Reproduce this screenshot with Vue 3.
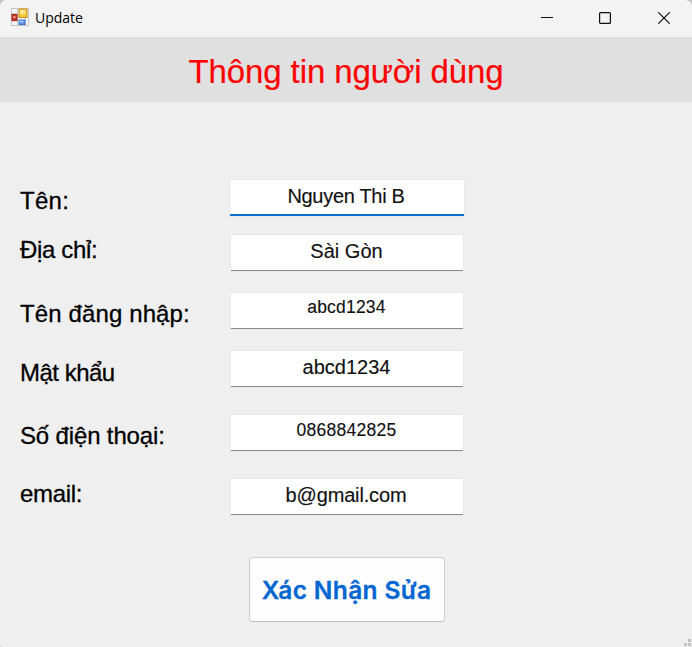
<script setup>
import { reactive } from 'vue'

const fields = reactive([
  { id: 'name', label: 'Tên:', value: 'Nguyen Thi B' },
  { id: 'address', label: 'Địa chỉ:', value: 'Sài Gòn' },
  { id: 'login', label: 'Tên đăng nhập:', value: 'abcd1234' },
  { id: 'password', label: 'Mật khẩu', value: 'abcd1234' },
  { id: 'phone', label: 'Số điện thoại:', value: '0868842825' },
  { id: 'email', label: 'email:', value: 'b@gmail.com' },
])
</script>

<template>
  <div class="window">
    <header class="titlebar">
      <svg class="app-icon" width="18" height="18" viewBox="0 0 18 18">
        <rect x="0.5" y="0.5" width="17" height="17" fill="#f4f5f6" stroke="#c3c5c8" />
        <path d="M6.5 0.5V17.5M0.5 5.5H6M0.5 13H6M14.5 10V17.5" stroke="#c9cbce" fill="none" />
        <rect x="8" y="1" width="8" height="8.5" fill="#f7c93e" stroke="#c99512" />
        <rect x="9" y="2" width="5" height="4" fill="#fde694" />
        <rect x="1" y="6.5" width="5" height="6" fill="#c93a30" stroke="#a5231d" />
        <rect x="2.5" y="8" width="2" height="2" fill="#f0a39b" />
        <rect x="8" y="12" width="6" height="4.5" fill="#5b92e5" stroke="#3f74cd" />
        <rect x="8.5" y="12.5" width="4" height="2" fill="#9cc1f5" />
      </svg>
      <span class="caption">Update</span>
      <div class="controls">
        <svg width="12" height="12" viewBox="0 0 12 12"><path d="M0 5.5H12" /></svg>
        <svg width="12" height="12" viewBox="0 0 12 12"><rect x="0.6" y="0.6" width="10.8" height="10.8" rx="1" /></svg>
        <svg width="12" height="12" viewBox="0 0 12 12"><path d="M0.3 0.3L11.7 11.7M11.7 0.3L0.3 11.7" /></svg>
      </div>
    </header>
    <div class="banner"><h1>Thông tin người dùng</h1></div>
    <main class="form">
      <div v-for="f in fields" :key="f.id" class="field" :class="f.id">
        <label :for="f.id"><span>{{ f.label }}</span></label>
        <div :id="f.id" class="box"><span>{{ f.value }}</span></div>
      </div>
      <button class="confirm"><span>Xác Nhận Sửa</span></button>
    </main>
    <svg class="grip" width="8" height="8" viewBox="0 0 8 8">
      <path d="M4 0h3v3h-3zM0 4h3v3h-3zM4 4h3v3h-3z" />
    </svg>
  </div>
</template>

<style>
body {
  background: #c4c4c4;
}
</style>

<style scoped>
.window {
  position: relative;
  display: flex;
  flex-direction: column;
  width: 692px;
  height: 647px;
  overflow: hidden;
  border-radius: 7px 7px 2px 2px;
  background: #efefef;
  font-family: "Liberation Sans", Arial, sans-serif;
  color: #000;
}
.titlebar {
  display: flex;
  align-items: center;
  height: 37px;
  padding-left: 11px;
  background: #f3f3f3;
}
.app-icon {
  margin-top: -3px;
}
.caption {
  margin: -1px 0 0 6px;
  font: 14px/20px "Open Sans", "Noto Sans", sans-serif;
}
.controls {
  display: flex;
  gap: 47px;
  margin: -1px 22px 0 auto;
}
.controls svg {
  fill: none;
  stroke: #111;
  stroke-width: 1.2;
}
.controls svg:first-child {
  margin-right: -1px;
}
.banner {
  display: flex;
  justify-content: center;
  height: 65px;
  background: #e0e0e0;
}
h1 {
  margin: 0;
  font-size: 33px;
  font-weight: 400;
  line-height: 70px;
  letter-spacing: -0.1px;
  color: #f00;
  -webkit-text-stroke: 0.2px #f00;
}
.form {
  display: flex;
  flex-direction: column;
  padding: 78px 0 0 20px;
}
.field {
  display: grid;
  grid-template-columns: 211px 232px;
  height: 36px;
}
label {
  font-size: 24px;
  line-height: 36px;
  white-space: nowrap;
  -webkit-text-stroke: 0.3px #000;
}
.box {
  box-sizing: border-box;
  height: 36px;
  padding-right: 1px;
  border-bottom: 1px solid #8c8c8c;
  background: #fff;
  box-shadow: 0 0 0 1px #e9e9e9;
  font-size: 20px;
  line-height: 33px;
  text-align: center;
  color: #111;
  -webkit-text-stroke: 0.15px #111;
}
.name label { padding-top: 3px; letter-spacing: 0.3px; }
.name .box {
  margin: 0 -1px;
  padding-right: 2px;
  border-bottom: 2px solid #0a6fc9;
  letter-spacing: -0.3px;
}
.address { margin-top: 19px; }
.address label { margin-top: -3px; letter-spacing: -0.35px; }
.login { margin-top: 22px; }
.login label { padding-top: 3px; letter-spacing: 0.12px; }
.login .box { font-size: 17.5px; line-height: 29px; letter-spacing: 0.2px; }
.password { margin-top: 22px; }
.password label { padding-top: 4px; letter-spacing: -0.5px; }
.phone { margin-top: 28px; }
.phone label { padding-top: 3px; letter-spacing: -0.15px; }
.phone .box { font-size: 17.5px; line-height: 30px; letter-spacing: 0.28px; }
.email { margin-top: 28px; }
.email label { margin-top: -3px; letter-spacing: -0.3px; }
.email .box { padding-right: 2px; letter-spacing: -0.15px; }
.confirm {
  width: 196px;
  height: 65px;
  margin: 42px 0 0 229px;
  padding: 0 1px 0 0;
  border: 1px solid #cfcfcf;
  border-bottom-color: #bcbcbc;
  border-radius: 4px;
  background: #fdfdfd;
  font: 600 24.5px/64px Inter, "Liberation Sans", sans-serif;
  letter-spacing: 0.35px;
  white-space: nowrap;
  color: #0066d2;
  -webkit-text-stroke: 0.3px #0066d2;
}
.grip {
  position: absolute;
  right: 0;
  bottom: 0;
  fill: #c0c0c0;
}
</style>
